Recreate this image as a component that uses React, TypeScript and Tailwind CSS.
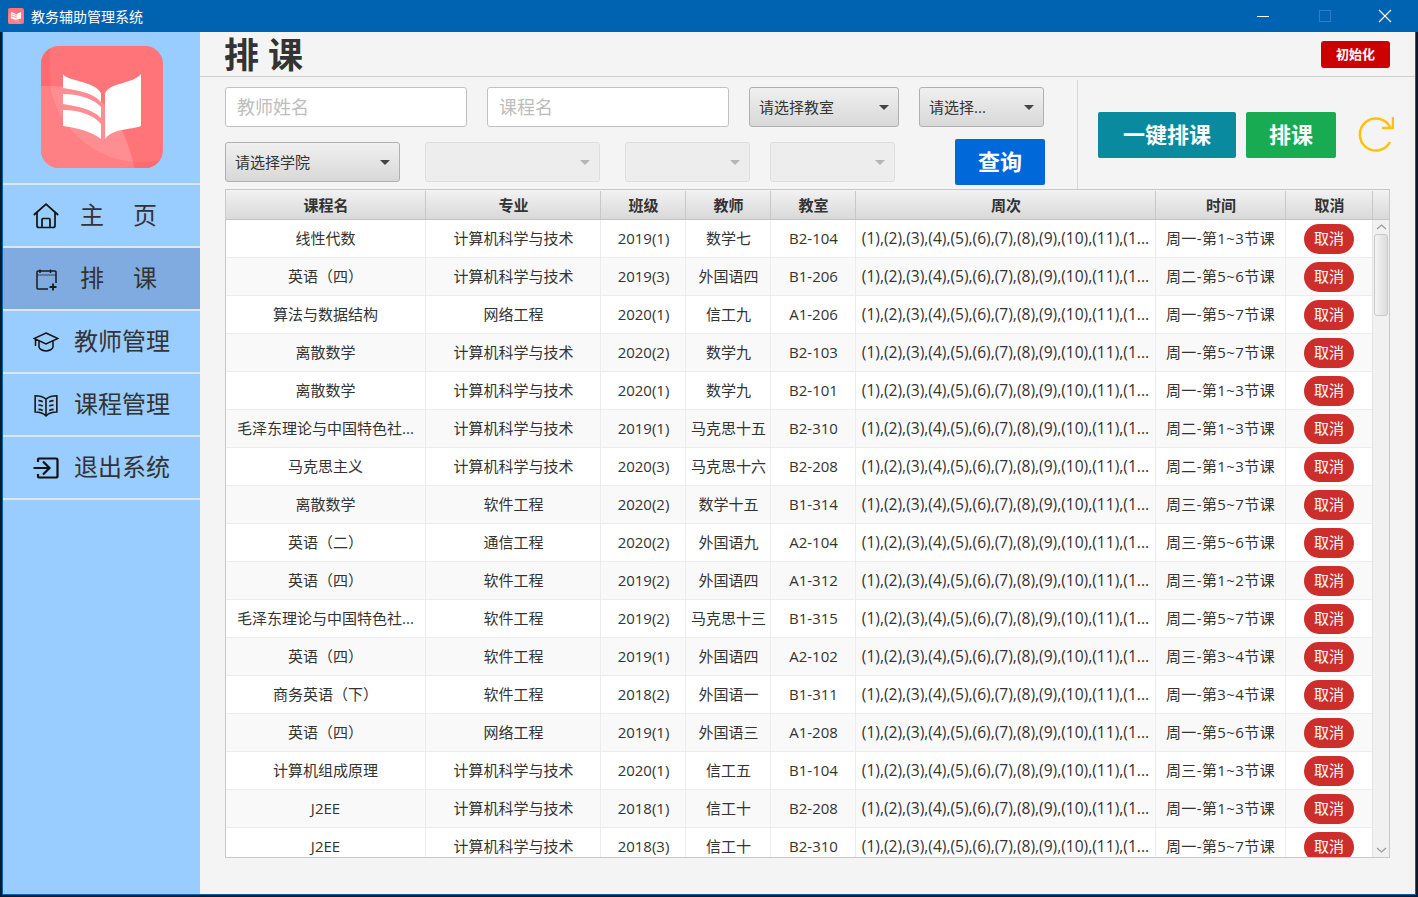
import { ReactNode } from "react";

const FONT = "[font-family:'Open_Sans','Noto_Sans_CJK_SC',sans-serif]";

const COLUMNS = [
  { title: "课程名", width: "w-[200px]" },
  { title: "专业", width: "w-[175px]" },
  { title: "班级", width: "w-[85px]" },
  { title: "教师", width: "w-[85px]" },
  { title: "教室", width: "w-[85px]" },
  { title: "周次", width: "w-[300px]" },
  { title: "时间", width: "w-[130px]" },
  { title: "取消", width: "w-[87px]" },
];

const CS = "计算机科学与技术";
const WEEKS = "(1),(2),(3),(4),(5),(6),(7),(8),(9),(10),(11),(1...";
const MAO = "毛泽东理论与中国特色社...";

const ROWS = [
  ["线性代数", CS, "2019(1)", "数学七", "B2-104", "周一-第1~3节课"],
  ["英语（四）", CS, "2019(3)", "外国语四", "B1-206", "周二-第5~6节课"],
  ["算法与数据结构", "网络工程", "2020(1)", "信工九", "A1-206", "周一-第5~7节课"],
  ["离散数学", CS, "2020(2)", "数学九", "B2-103", "周一-第5~7节课"],
  ["离散数学", CS, "2020(1)", "数学九", "B2-101", "周一-第1~3节课"],
  [MAO, CS, "2019(1)", "马克思十五", "B2-310", "周二-第1~3节课"],
  ["马克思主义", CS, "2020(3)", "马克思十六", "B2-208", "周二-第1~3节课"],
  ["离散数学", "软件工程", "2020(2)", "数学十五", "B1-314", "周三-第5~7节课"],
  ["英语（二）", "通信工程", "2020(2)", "外国语九", "A2-104", "周三-第5~6节课"],
  ["英语（四）", "软件工程", "2019(2)", "外国语四", "A1-312", "周三-第1~2节课"],
  [MAO, "软件工程", "2019(2)", "马克思十三", "B1-315", "周二-第5~7节课"],
  ["英语（四）", "软件工程", "2019(1)", "外国语四", "A2-102", "周三-第3~4节课"],
  ["商务英语（下）", "软件工程", "2018(2)", "外国语一", "B1-311", "周一-第3~4节课"],
  ["英语（四）", "网络工程", "2019(1)", "外国语三", "A1-208", "周一-第5~6节课"],
  ["计算机组成原理", CS, "2020(1)", "信工五", "B1-104", "周三-第1~3节课"],
  ["J2EE", CS, "2018(1)", "信工十", "B2-208", "周一-第1~3节课"],
  ["J2EE", CS, "2018(3)", "信工十", "B2-310", "周一-第5~7节课"],
];

const Logo = ({ className }: { className: string }) => (
  <svg viewBox="0 0 122 122" className={className}>
    <defs>
      <clipPath id="logoClip">
        <rect width="122" height="122" rx="18" />
      </clipPath>
    </defs>
    <g clipPath="url(#logoClip)">
      <rect width="122" height="122" fill="#ff7478" />
      <path d="M0 0H9C8 14 9 28 9 40H0Z" fill="#ff6a6e" />
      <path d="M0 40H9C16 80 50 112 92 116L93 122H0Z" fill="#ff8084" />
      <path d="M9 40C22 40 36 43 48 48C70 58 84 84 92 116C50 112 16 80 9 40Z" fill="#ff8e92" />
      <path d="M92 116C104 116 114 116 122 113V122H94Z" fill="#ff6a6e" />
      <path d="M22 28C27 36 52 34 60 47V56C50 45 32 44 22 42Z" fill="#fff" />
      <path d="M22 48C36 48 52 52 60 61V72C50 62 34 60 22 58Z" fill="#fff" />
      <path d="M22 64C36 64 52 68 60 78V93C50 85 36 82 22 80Z" fill="#fff" />
      <path d="M64 47C70 36 92 38 100 28V80C90 84 72 82 64 93Z" fill="#fff" />
    </g>
  </svg>
);

const HomeIcon = () => (
  <svg viewBox="0 0 26 26" className="h-[26px] w-[26px]" fill="none" stroke="#111" strokeWidth="1.700">
    <path d="M0.800 12L13 1.200L25.200 12M4 9.500V22.500a2 2 0 0 0 2 2H20a2 2 0 0 0 2-2V9.500M9 24.500V16.500a1 1 0 0 1 1-1H16a1 1 0 0 1 1 1V24.500" />
  </svg>
);

const CalendarIcon = () => (
  <svg viewBox="0 0 24 24" className="h-[24px] w-[24px]" fill="none" stroke="#1a1a1a" strokeWidth="1.500">
    <path d="M14 22H4a1 1 0 0 1-1-1V5a1 1 0 0 1 1-1h2M6 2.500v3.500M16.500 2.500v3.500M6 4h10.500M16.500 4H21a1 1 0 0 1 1 1V16" />
    <path d="M3 8H22" strokeWidth="0.700" />
    <path d="M19 16.500v7M15.500 20H22.500" strokeWidth="1.800" />
  </svg>
);

const CapIcon = () => (
  <svg viewBox="0 0 26 20" className="h-[20px] w-[26px]" fill="none" stroke="#111" strokeWidth="1.500">
    <path d="M13 1L25 6.500L13 12L1 6.500ZM6 9V15C6 17 10 19 13 19C16 19 20 17 20 15V9M2.500 7.500V14" />
  </svg>
);

const BookIcon = () => (
  <svg viewBox="0 0 24 24" className="h-[26px] w-[26px]" fill="none" stroke="#1a1a1a" strokeWidth="1.500">
    <path d="M12 6.500C9.500 4.500 6 3.500 2 3.500V18.500C6 18.500 9.500 19.500 12 22C14.500 19.500 18 18.500 22 18.500V3.500C18 3.500 14.500 4.500 12 6.500ZM12 6.500V22" />
    <path d="M5 8C6.500 8 8 8.500 9 9M5 12C6.500 12 8 12.500 9 13M5 16C6.500 16 8 16.500 9 17M19 8C17.500 8 16 8.500 15 9M19 12C17.500 12 16 12.500 15 13M19 16C17.500 16 16 16.500 15 17" />
  </svg>
);

const ExitIcon = () => (
  <svg viewBox="0 0 26 24" className="h-[24px] w-[26px]" fill="none" stroke="#111" strokeWidth="2.200">
    <path d="M5 6V3.500a1 1 0 0 1 1-1H23a1.500 1.500 0 0 1 1.500 1.500V20a1.500 1.500 0 0 1-1.500 1.500H6a1 1 0 0 1-1-1V18" />
    <path d="M0.500 12H16M10 5.500L16.500 12L10 18.500" />
  </svg>
);

const NavItem = ({
  icon,
  active,
  children,
}: {
  icon: ReactNode;
  active?: boolean;
  children: ReactNode;
}) => (
  <div
    className={`flex h-[63px] items-center border-b-2 border-[#dde6ee] pb-[2px] text-[24px] text-[#333] ${
      active ? "bg-[#80abe0]" : ""
    }`}
  >
    <div className="flex w-[71px] justify-center pl-[15px] pt-[2px]">{icon}</div>
    {children}
  </div>
);

const SpacedLabel = ({ a, b }: { a: string; b: string }) => (
  <div className="ml-[6px] flex w-[77px] justify-between">
    <span>{a}</span>
    <span>{b}</span>
  </div>
);

const TextField = ({ hint }: { hint: string }) => (
  <div className="flex h-[40px] w-[242px] items-center rounded-[3px] border border-[#c2c2c2] bg-white pl-[11px] pt-[1px] text-[18px] text-[#bdbdbd]">
    {hint}
  </div>
);

const Select = ({
  label,
  width,
  disabled,
}: {
  label?: string;
  width: string;
  disabled?: boolean;
}) => (
  <div
    className={`flex h-[40px] items-center justify-between rounded-[3px] border pl-[9px] pr-[9px] text-[15px] text-[#333] ${width} ${
      disabled
        ? "border-[#dedede] bg-[#ededed]"
        : "border-[#b0b0b0] bg-gradient-to-b from-[#f0f0f0] to-[#d8d8d8]"
    }`}
  >
    <span>{label}</span>
    <span
      className={`h-0 w-0 border-x-[5px] border-t-[5px] border-x-transparent ${
        disabled ? "border-t-[#b5b5b5]" : "border-t-[#444]"
      }`}
    />
  </div>
);

const ScrollBar = () => (
  <div className="flex w-[17px] shrink-0 flex-col items-center border-l border-[#e4e4e4] bg-[#f1f1f1]">
    <svg viewBox="0 0 17 14" className="h-[14px] w-[17px]" fill="none" stroke="#999" strokeWidth="1.200">
      <path d="M4 9L8.500 5L13 9" />
    </svg>
    <div className="h-[82px] w-[14px] rounded-[3px] border border-[#c8c8c8] bg-gradient-to-r from-[#f4f4f4] to-[#dcdcdc]" />
    <div className="flex-1" />
    <svg viewBox="0 0 17 14" className="h-[14px] w-[17px]" fill="none" stroke="#999" strokeWidth="1.200">
      <path d="M4 5L8.500 9L13 5" />
    </svg>
  </div>
);

export default function App() {
  return (
    <div className={`flex h-[897px] w-[1418px] flex-col overflow-hidden bg-[#0b1a2b] px-[2px] pb-[2px] ${FONT}`}>
      {/* title bar */}
      <header className="-mx-[2px] flex h-[32px] shrink-0 items-center bg-[#0063b1] text-[14px] text-white">
        <Logo className="ml-[8px] h-[16px] w-[16px]" />
        <span className="ml-[7px]">教务辅助管理系统</span>
        <div className="ml-auto flex items-center">
          <div className="mr-[50px] h-px w-[12px] bg-white" />
          <div className="mr-[47px] h-[12px] w-[12px] border border-[#2f7fc0]" />
          <svg viewBox="0 0 14 14" className="mr-[26px] h-[14px] w-[14px]" stroke="#fff" strokeWidth="1.100">
            <path d="M1 1L13 13M13 1L1 13" />
          </svg>
        </div>
      </header>

      <div className="flex min-h-0 flex-1 border-x border-b border-[#0063b1]">
        {/* sidebar */}
        <aside className="w-[197px] shrink-0 bg-[#99ccff]">
          <div className="flex h-[153px] items-start justify-center border-b-2 border-[#dde6ee] pt-[14px]">
            <Logo className="h-[122px] w-[122px]" />
          </div>
          <NavItem icon={<HomeIcon />}>
            <SpacedLabel a="主" b="页" />
          </NavItem>
          <NavItem active icon={<CalendarIcon />}>
            <SpacedLabel a="排" b="课" />
          </NavItem>
          <NavItem icon={<CapIcon />}>教师管理</NavItem>
          <NavItem icon={<BookIcon />}>课程管理</NavItem>
          <NavItem icon={<ExitIcon />}>退出系统</NavItem>
        </aside>

        {/* main */}
        <main className="flex min-w-0 flex-1 flex-col bg-[#f4f4f4]">
          <div className="flex h-[45px] shrink-0 items-center justify-between border-b border-[#cfcfcf] pl-[24px] pr-[25px]">
            <h1 className="text-[35px] leading-none font-bold text-[#333]">排 课</h1>
            <div className="mt-[1px] flex h-[27px] w-[69px] items-center justify-center rounded-[3px] bg-[#cc0000] text-[13px] font-bold text-white">
              初始化
            </div>
          </div>

          <section className="flex h-[112px] shrink-0">
            <div className="w-[877px] pl-[25px] pt-[10px]">
              <div className="flex gap-[20px]">
                <TextField hint="教师姓名" />
                <TextField hint="课程名" />
                <Select label="请选择教室" width="w-[150px]" />
                <Select label="请选择..." width="w-[125px]" />
              </div>
              <div className="mt-[15px] flex items-center">
                <Select label="请选择学院" width="w-[175px]" />
                <div className="ml-[25px]"><Select disabled width="w-[175px]" /></div>
                <div className="ml-[25px]"><Select disabled width="w-[125px]" /></div>
                <div className="ml-[20px]"><Select disabled width="w-[125px]" /></div>
                <div className="-my-[3px] ml-[60px] flex h-[46px] w-[90px] items-center justify-center rounded-[2px] bg-[#0068d9] pb-[2px] text-[22px] font-bold text-white">
                  查询
                </div>
              </div>
            </div>
            <div className="mt-[3px] flex flex-1 items-start border-l border-[#d8d8d8] pl-[20px] pt-[32px]">
              <div className="flex h-[46px] w-[138px] items-center justify-center rounded-[2px] bg-[#0a8a9e] pb-[2px] text-[22px] font-bold text-white">
                一键排课
              </div>
              <div className="ml-[10px] flex h-[46px] w-[90px] items-center justify-center rounded-[2px] bg-[#19ab52] pb-[2px] text-[22px] font-bold text-white">
                排课
              </div>
              <svg viewBox="0 0 36 36" className="ml-[22px] mt-[4px] h-[36px] w-[36px]" fill="none" stroke="#ffc107" strokeWidth="2.500">
                <path d="M32 11A16 16 0 1 0 32 26M24 12H35V1" />
              </svg>
            </div>
          </section>

          {/* table */}
          <div className="ml-[25px] flex h-[669px] w-[1165px] shrink-0 flex-col overflow-hidden border border-[#c8c8c8] bg-white">
            <div className="flex h-[30px] shrink-0 border-b border-[#c4c4c4] bg-gradient-to-b from-[#f2f2f2] to-[#d9d9d9] pt-[1px] text-[15px] font-bold text-[#333]">
              {COLUMNS.map((c) => (
                <div key={c.title} className={`flex items-center justify-center border-r border-[#c8c8c8] pl-px ${c.width}`}>
                  {c.title}
                </div>
              ))}
            </div>
            <div className="flex min-h-0 flex-1">
              <div className="min-w-0 flex-1 overflow-hidden">
                {ROWS.map((row, i) => (
                  <div
                    key={i}
                    className={`flex h-[38px] border-b border-[#ececec] text-[15px] text-[#333] ${
                      i % 2 === 0 ? "bg-white" : "bg-[#f9f9f9]"
                    }`}
                  >
                    <div className="flex w-[200px] items-center justify-center border-r border-[#ececec] whitespace-nowrap">{row[0]}</div>
                    <div className="flex w-[175px] items-center justify-center border-r border-[#ececec] pl-px">{row[1]}</div>
                    <div className="flex w-[85px] items-center justify-center border-r border-[#ececec] pl-px">{row[2]}</div>
                    <div className="flex w-[85px] items-center justify-center border-r border-[#ececec] pl-px">{row[3]}</div>
                    <div className="flex w-[85px] items-center justify-center border-r border-[#ececec] pl-px">{row[4]}</div>
                    <div className="flex w-[300px] items-center justify-center overflow-hidden border-r border-[#ececec] text-[15.6px] whitespace-nowrap">{WEEKS}</div>
                    <div className="flex w-[130px] items-center justify-center border-r border-[#ececec] tracking-[0.4px]">{row[5]}</div>
                    <div className="flex w-[86px] items-center justify-center">
                      <div className="flex h-[30px] w-[50px] items-center justify-center rounded-full bg-[#cc2e2b] text-white">取消</div>
                    </div>
                  </div>
                ))}
              </div>
              <ScrollBar />
            </div>
          </div>
        </main>
      </div>
    </div>
  );
}
